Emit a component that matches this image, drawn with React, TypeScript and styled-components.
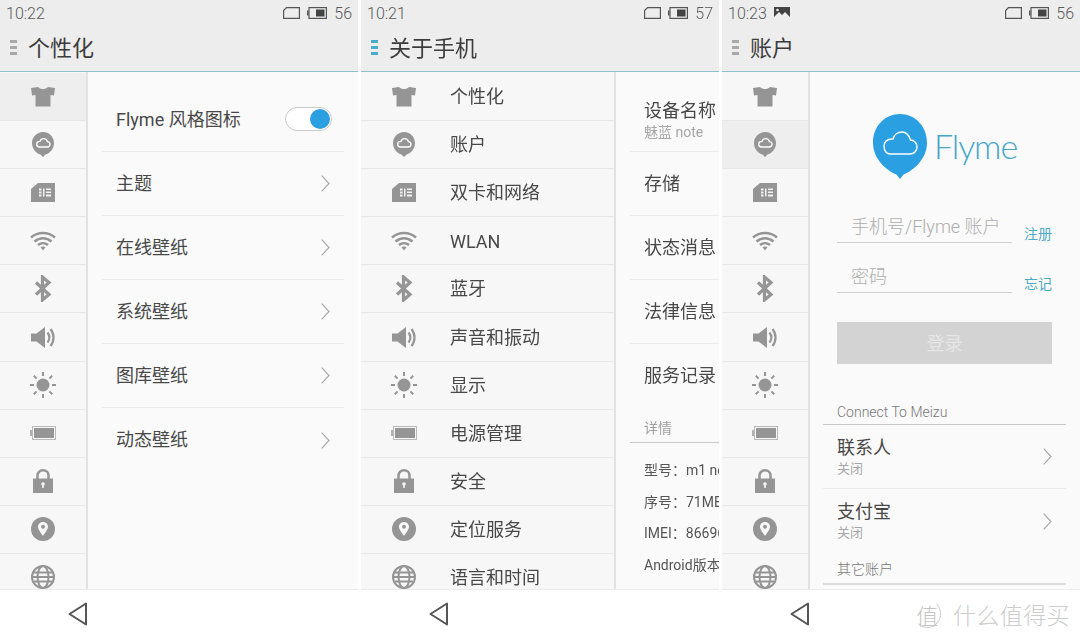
import React from 'react'
import styled, {createGlobalStyle} from 'styled-components'

const GlobalStyle = createGlobalStyle`
  html, body {
    margin: 0;
    padding: 0;
    background: #fff;
    overflow: hidden;
  }
  * {
    box-sizing: border-box;
  }
`

const Screens = styled.div`
  display: grid;
  grid-template-columns: 358px 358px 358px;
  column-gap: 3px;
  width: 1080px;
  height: 637px;
  font-family: Roboto, 'Noto Sans CJK SC', sans-serif;
  color: #484848;
  filter: blur(0.35px);
`

const Phone = styled.section`
  display: flex;
  flex-direction: column;
  height: 637px;
  overflow: hidden;
`

const StatusBar = styled.div`
  display: flex;
  align-items: center;
  height: 26px;
  padding: 0 6px;
  background: #ededed;
  color: #5a5a5a;
  font-size: 16px;
  font-weight: 300;
`

const StatusLeft = styled.div`
  display: flex;
  align-items: center;
  gap: 7px;
  flex: 1;
`

const StatusRight = styled.div`
  display: flex;
  align-items: center;
  gap: 7px;
`

const Header = styled.header`
  display: flex;
  align-items: center;
  gap: 11px;
  height: 46px;
  padding: 0 0 2px 10px;
  background: #ededed;
  border-bottom: 1px solid #8fc1cd;
`

const Title = styled.h1`
  margin: 0 0 4px;
  font-size: 22px;
  font-weight: 400;
  color: #3c3c3c;
`

const MenuMark = styled.span<{$active?: boolean}>`
  display: flex;
  flex-direction: column;
  gap: 3px;
  width: 7px;
  i {
    display: block;
    height: 3px;
    background: ${(p) => (p.$active ? '#4aaccb' : '#a8a8a8')};
  }
`

const Body = styled.main`
  display: flex;
  flex: 1;
  min-height: 0;
  overflow: hidden;
  background: #fafafa;
`

const Sidebar = styled.nav<{$wide?: boolean}>`
  flex: 0 0 ${(p) => (p.$wide ? '255px' : '88px')};
  padding-top: 1px;
  background: #f7f7f7;
  border-right: 2px solid #e2e2e2;
`

const SideRow = styled.div<{$selected?: boolean}>`
  display: flex;
  align-items: center;
  height: 48.1px;
  background: ${(p) => (p.$selected ? '#eeeeee' : 'transparent')};
  border-bottom: 1px solid #e8e8e8;
`

const SideIcon = styled.span`
  display: flex;
  flex: 0 0 86px;
  justify-content: center;
`

const SideLabel = styled.span<{$latin?: boolean}>`
  margin: ${(p) => (p.$latin ? '1px 0 0 3px' : '0 0 3px 3px')};
  font-size: 18px;
  white-space: nowrap;
`

const Content = styled.div<{$flush?: boolean}>`
  flex: 1;
  min-width: 0;
  overflow: hidden;
  padding: 0 ${(p) => (p.$flush ? '0' : '14px')} 0 14px;
`

const Row = styled.div<{$first?: boolean; $last?: boolean}>`
  display: flex;
  align-items: center;
  justify-content: space-between;
  height: ${(p) => (p.$first ? '80px' : '64px')};
  padding: ${(p) => (p.$first ? '14px 12px 0 14px' : '0 14px')};
  font-size: 18px;
  white-space: nowrap;
  border-bottom: ${(p) => (p.$last ? 'none' : '1px solid #ececec')};
`

const RowLabel = styled.span<{$first?: boolean}>`
  margin-bottom: ${(p) => (p.$first ? '2px' : '4px')};
`

const Stack = styled.div`
  display: flex;
  flex-direction: column;
`

const DeviceStack = styled(Stack)`
  margin-top: 2px;
`

const RowTitle = styled.span`
  font-size: 18px;
  line-height: 24px;
`

const RowSub = styled.span`
  font-size: 13px;
  line-height: 18px;
  color: #a6a6a6;
`

const DeviceSub = styled(RowSub)`
  font-size: 14px;
`

const Toggle = styled.span`
  display: flex;
  align-items: center;
  justify-content: flex-end;
  width: 47px;
  height: 24px;
  padding-right: 1px;
  background: #fff;
  border: 1px solid #c9c9c9;
  border-radius: 12px;
  &::after {
    content: '';
    width: 20px;
    height: 20px;
    border-radius: 50%;
    background: #2a9fe2;
  }
`

const DetailHead = styled.div`
  display: flex;
  align-items: flex-end;
  height: 35px;
  padding: 0 0 5px 14px;
  font-size: 14px;
  color: #a0a0a0;
  border-bottom: 1px solid #c8c8c8;
`

const DetailList = styled.div`
  padding: 12px 0 0 14px;
  white-space: nowrap;
`

const DetailLine = styled.div`
  font-size: 14px;
  line-height: 31.5px;
  color: #555;
`

const LoginPanel = styled.div`
  flex: 1;
  min-width: 0;
  overflow: hidden;
`

const LoginForm = styled.div`
  display: flex;
  flex-direction: column;
  padding: 42px 28px 0 27px;
`

const Brand = styled.div`
  display: flex;
  align-items: flex-start;
  gap: 7px;
  height: 65px;
  margin: 0 0 33px 36px;
`

const BrandName = styled.span`
  margin-top: 9px;
  font-family: Lato, Roboto, sans-serif;
  font-size: 34px;
  font-weight: 300;
  line-height: 46px;
  letter-spacing: -1.1px;
  color: #46a5ca;
`

const Field = styled.div`
  display: flex;
  align-items: flex-end;
  gap: 12px;
  margin-bottom: 19px;
`

const Input = styled.div`
  flex: 0 0 175px;
  height: 31px;
  padding-left: 14px;
  font-size: 18px;
  font-weight: 300;
  line-height: 29px;
  color: #adadad;
  white-space: nowrap;
  border-bottom: 1px solid #cfcfcf;
`

const FieldLink = styled.span`
  margin-bottom: -1px;
  font-size: 14px;
  line-height: 20px;
  color: #4fa9c4;
`

const SubmitButton = styled.button`
  height: 42px;
  margin-top: 10px;
  padding: 0 0 2px;
  border: none;
  background: #d3d3d3;
  color: #e6e6e6;
  font-family: inherit;
  font-size: 18px;
`

const Accounts = styled.div`
  padding: 0 14px 0 13px;
`

const SectionHead = styled.div<{$tall?: boolean; $heavy?: boolean}>`
  display: flex;
  align-items: flex-end;
  height: ${(p) => (p.$tall ? '61px' : '32px')};
  padding: 0 0 ${(p) => (p.$tall ? '4px' : '5px')} 14px;
  font-size: 14px;
  font-weight: 300;
  color: #777;
  border-bottom: ${(p) => (p.$heavy ? '2px solid #dcdcdc' : '1px solid #c8c8c8')};
`

const BottomBar = styled.footer`
  display: flex;
  align-items: center;
  flex: 0 0 48px;
  padding-left: 68px;
  background: #fff;
  border-top: 1px solid #ececec;
`

const Watermark = styled.div`
  display: flex;
  align-items: center;
  gap: 12px;
  margin-left: auto;
  padding-right: 10px;
  font-size: 23px;
  font-weight: 300;
  letter-spacing: 0.4px;
  color: #cdcdcd;
`

const WatermarkBadge = styled.span`
  display: flex;
  align-items: center;
  justify-content: center;
  width: 27px;
  height: 28px;
  font-size: 22px;
  color: #c4c4c4;
  border: 1.5px solid #d0d0d0;
  border-top-color: transparent;
  border-left-color: transparent;
  border-radius: 50%;
`

const gray = '#959595'

const Shirt = () => (
  <svg width="24" height="20" viewBox="0 0 24 20">
    <path fill={gray} d="M0 1 7 0C8.500 1.500 10 2 12 2s3.500-.5 5-2L24 1 23 8.500 19.500 8V19.500H4.500V8L1 8.500Z" />
  </svg>
)

const CloudPin = () => (
  <svg width="22" height="26" viewBox="0 0 22 26">
    <path fill={gray} d="M11 0C17 0 22 4.800 22 11S17.500 21.500 13.500 22.500L11 25 8.500 22.500C4.500 21.500 0 17 0 11S5 0 11 0Z" />
    <path fill="none" stroke="#fff" strokeWidth="1.300" d="M7.500 15H15C16.800 15 18 13.700 18 12.200S16.800 9.700 15.400 9.600C15 7.700 13.500 6.600 11.700 6.600 9.900 6.600 8.500 7.700 8 9.400 6 9.400 4.700 10.700 4.700 12.200S5.800 15 7.500 15Z" />
  </svg>
)

const SimCard = () => (
  <svg width="24" height="19" viewBox="0 0 24 19">
    <path fill={gray} d="M7 0H24V19H0V6Z" />
    <path fill="#f2f2f2" d="M8 5.500h2.500v2H8zM8 8.500h2.500v2H8zM8 11.500h2.500v2H8zM12 5.500h1.500v8H12zM15 5.500h5V7h-5zM15 8.500h5V10h-5zM15 11.500h5v2h-5z" />
  </svg>
)

const Wifi = () => (
  <svg width="26" height="20" viewBox="0 0 26 20" fill="none" stroke={gray} strokeWidth="2.500">
    <path d="M1 6.500C8 .5 18 .5 25 6.500" />
    <path d="M4.500 10.500C9.500 6 16.500 6 21.500 10.500" />
    <path d="M8 14C11 11.500 15 11.500 18 14" />
    <path fill={gray} stroke="none" d="M10.500 16.200C12 15.200 14 15.200 15.500 16.200L13 19.500Z" />
  </svg>
)

const Bluetooth = () => (
  <svg width="18" height="27" viewBox="0 0 18 27" fill="none" stroke={gray} strokeWidth="3.200">
    <path d="M2 7.500 15 19.500 8.500 25V2L15 7.500 2 19.500" />
  </svg>
)

const Speaker = () => (
  <svg width="24" height="21" viewBox="0 0 24 21">
    <path fill={gray} d="M0 6.500H5.500L14 0V21L5.500 14.500H0Z" />
    <path fill="none" stroke={gray} strokeWidth="2.200" d="M16.500 5.500C18.800 8.500 18.800 12.500 16.500 15.500" />
    <path fill="none" stroke={gray} strokeWidth="2.200" d="M19.500 2C23.500 7 23.500 14 19.500 19" />
  </svg>
)

const Sun = () => (
  <svg width="26" height="26" viewBox="0 0 26 26">
    <circle cx="13" cy="13" r="6.500" fill={gray} />
    <path stroke={gray} strokeWidth="2" d="M13 0v4M13 22v4M0 13h4M22 13h4M3.800 3.800l2.800 2.800M19.400 19.400l2.800 2.800M3.800 22.200l2.800-2.800M19.400 6.600l2.800-2.800" />
  </svg>
)

const BatteryIcon = () => (
  <svg width="26" height="14" viewBox="0 0 26 14">
    <path fill="#b0b0b0" d="M0 4h2v6H0z" />
    <rect x="2.500" y=".5" width="23" height="13" fill="none" stroke="#b8b8b8" />
    <rect x="4" y="2" width="20" height="10" fill={gray} />
  </svg>
)

const Lock = () => (
  <svg width="20" height="24" viewBox="0 0 20 24">
    <path fill="none" stroke={gray} strokeWidth="2.500" d="M4.500 11V6.500C4.500 3.400 7 1.300 10 1.300s5.500 2.100 5.500 5.200V11" />
    <path fill={gray} d="M0 9.500H20V24H0Z" />
    <circle cx="10" cy="15" r="1.800" fill="#f4f4f4" />
    <path fill="#f4f4f4" d="M9.200 15h1.600v4H9.200z" />
  </svg>
)

const LocationPin = () => (
  <svg width="24" height="24" viewBox="0 0 24 24">
    <circle cx="12" cy="12" r="12" fill={gray} />
    <path fill="#f7f7f7" d="M12 5C15 5 17 7.200 17 9.800 17 12.500 14 16 12 19 10 16 7 12.500 7 9.800 7 7.200 9 5 12 5Z" />
    <circle cx="12" cy="9.800" r="2" fill={gray} />
  </svg>
)

const Globe = () => (
  <svg width="24" height="24" viewBox="0 0 24 24" fill="none" stroke={gray} strokeWidth="2">
    <circle cx="12" cy="12" r="11" />
    <ellipse cx="12" cy="12" rx="5.500" ry="11" />
    <path d="M2.500 7.500h19M1 12h22M2.500 16.500h19" />
  </svg>
)

const sideIcons = [Shirt, CloudPin, SimCard, Wifi, Bluetooth, Speaker, Sun, BatteryIcon, Lock, LocationPin, Globe]
const sideLabels = ['个性化', '账户', '双卡和网络', 'WLAN', '蓝牙', '声音和振动', '显示', '电源管理', '安全', '定位服务', '语言和时间']

const Chevron = () => (
  <svg width="9" height="17" viewBox="0 0 9 17" fill="none" stroke="#ababab" strokeWidth="1.200">
    <path d="M.7.7 8 8.500.7 16.300" />
  </svg>
)

const SimOutline = () => (
  <svg width="17" height="12" viewBox="0 0 17 12" fill="none" stroke="#555" strokeWidth="1.200">
    <path d="M3.500.6H16.400V11.400H.6V3.500Z" />
  </svg>
)

const StatusBattery = () => (
  <svg width="20" height="12" viewBox="0 0 20 12">
    <path fill="#555" d="M0 3.500h1.500v5H0z" />
    <rect x="2" y=".6" width="17.400" height="10.800" fill="none" stroke="#555" strokeWidth="1.200" />
    <rect x="9" y="2.500" width="8.500" height="7" fill="#444" />
  </svg>
)

const PictureMark = () => (
  <svg width="16" height="12" viewBox="0 0 16 12">
    <rect width="16" height="12" fill="#444" />
    <path fill="#eee" d="M0 10 5 5l3 3 3-3 5 5v2H0Z" />
    <circle cx="3.500" cy="3" r="1.300" fill="#eee" />
  </svg>
)

const BackArrow = () => (
  <svg width="20" height="24" viewBox="0 0 20 24" fill="none" stroke="#555" strokeWidth="2" strokeLinejoin="round">
    <path d="M18 1.500V22.500L1.500 12Z" />
  </svg>
)

const FlymeBalloon = () => (
  <svg width="54" height="65" viewBox="0 0 54 65">
    <path fill="#2a9fe2" d="M27 0C42 0 54 12 54 29 54 45 40 57 30.500 60.500L27 65 23.500 60.500C14 57 0 45 0 29 0 12 12 0 27 0Z" />
    <path fill="none" stroke="#fff" strokeWidth="1.400" d="M17 40H37C41 40 44 37 44 33S41 26 37.500 26C36 21 33 18 29 18 24.500 18 21 21 20 25 14 24.500 11 28 11 32.500 11 37 14 40 17 40Z" />
  </svg>
)

const Menu = ({active}: {active?: boolean}) => (
  <MenuMark $active={active}>
    <i />
    <i />
    <i />
  </MenuMark>
)

interface ChromeProps {
  time: string
  level: number
  title: string
  active?: boolean
  picture?: boolean
  watermark?: boolean
  children: React.ReactNode
}

const Chrome = ({time, level, title, active, picture, watermark, children}: ChromeProps) => (
  <Phone>
    <StatusBar>
      <StatusLeft>
        <span>{time}</span>
        {picture && <PictureMark />}
      </StatusLeft>
      <StatusRight>
        <SimOutline />
        <StatusBattery />
        <span>{level}</span>
      </StatusRight>
    </StatusBar>
    <Header>
      <Menu active={active} />
      <Title>{title}</Title>
    </Header>
    <Body>{children}</Body>
    <BottomBar>
      <BackArrow />
      {watermark && (
        <Watermark>
          <WatermarkBadge>值</WatermarkBadge>
          <span>什么值得买</span>
        </Watermark>
      )}
    </BottomBar>
  </Phone>
)

const IconRail = ({selected}: {selected?: number}) => (
  <Sidebar>
    {sideIcons.map((Icon, i) => (
      <SideRow key={i} $selected={i === selected}>
        <SideIcon>
          <Icon />
        </SideIcon>
      </SideRow>
    ))}
  </Sidebar>
)

const wallpapers = ['主题', '在线壁纸', '系统壁纸', '图库壁纸', '动态壁纸']
const aboutRows = ['存储', '状态消息', '法律信息', '服务记录']
const details = ['型号：m1 note', '序号：71MBAKP22', 'IMEI：866963020', 'Android版本：4.4.4']

export default function App() {
  return (
    <>
      <GlobalStyle />
      <Screens>
        <Chrome time="10:22" level={56} title="个性化">
          <IconRail selected={0} />
          <Content>
            <Row $first>
              <RowLabel $first>Flyme 风格图标</RowLabel>
              <Toggle />
            </Row>
            {wallpapers.map((label, i) => (
              <Row key={label} $last={i === wallpapers.length - 1}>
                <RowLabel>{label}</RowLabel>
                <Chevron />
              </Row>
            ))}
          </Content>
        </Chrome>

        <Chrome time="10:21" level={57} title="关于手机" active>
          <Sidebar $wide>
            {sideIcons.map((Icon, i) => (
              <SideRow key={i}>
                <SideIcon>
                  <Icon />
                </SideIcon>
                <SideLabel $latin={sideLabels[i] === 'WLAN'}>{sideLabels[i]}</SideLabel>
              </SideRow>
            ))}
          </Sidebar>
          <Content $flush>
            <Row $first>
              <DeviceStack>
                <RowTitle>设备名称</RowTitle>
                <DeviceSub>魅蓝 note</DeviceSub>
              </DeviceStack>
            </Row>
            {aboutRows.map((label, i) => (
              <Row key={label} $last={i === aboutRows.length - 1}>
                <RowLabel>{label}</RowLabel>
              </Row>
            ))}
            <DetailHead>详情</DetailHead>
            <DetailList>
              {details.map((line) => (
                <DetailLine key={line}>{line}</DetailLine>
              ))}
            </DetailList>
          </Content>
        </Chrome>

        <Chrome time="10:23" level={56} title="账户" picture watermark>
          <IconRail selected={1} />
          <LoginPanel>
            <LoginForm>
              <Brand>
                <FlymeBalloon />
                <BrandName>Flyme</BrandName>
              </Brand>
              <Field>
                <Input>手机号/Flyme 账户</Input>
                <FieldLink>注册</FieldLink>
              </Field>
              <Field>
                <Input>密码</Input>
                <FieldLink>忘记</FieldLink>
              </Field>
              <SubmitButton>登录</SubmitButton>
            </LoginForm>
            <Accounts>
              <SectionHead $tall>Connect To Meizu</SectionHead>
              <Row>
                <Stack>
                  <RowTitle>联系人</RowTitle>
                  <RowSub>关闭</RowSub>
                </Stack>
                <Chevron />
              </Row>
              <Row $last>
                <Stack>
                  <RowTitle>支付宝</RowTitle>
                  <RowSub>关闭</RowSub>
                </Stack>
                <Chevron />
              </Row>
              <SectionHead $heavy>其它账户</SectionHead>
            </Accounts>
          </LoginPanel>
        </Chrome>
      </Screens>
    </>
  )
}
